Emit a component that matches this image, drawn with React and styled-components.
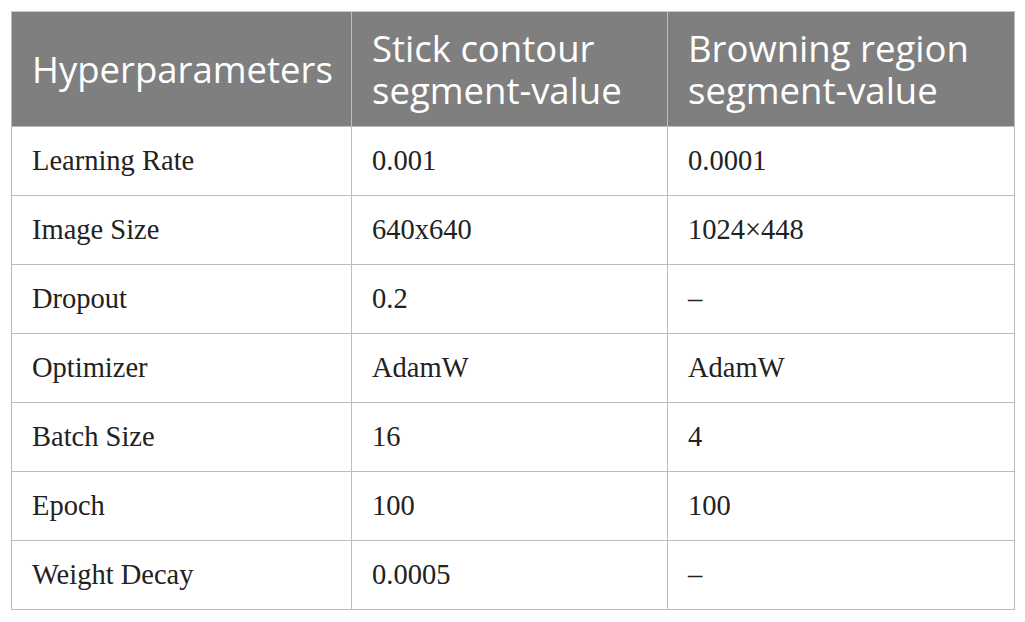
import React from 'react';
import styled, { createGlobalStyle } from 'styled-components';

const GlobalStyle = createGlobalStyle`
  body {
    margin: 0;
    background: #fff;
  }
`;

const rows = [
  ['Learning Rate', '0.001', '0.0001'],
  ['Image Size', '640x640', '1024×448'],
  ['Dropout', '0.2', '–'],
  ['Optimizer', 'AdamW', 'AdamW'],
  ['Batch Size', '16', '4'],
  ['Epoch', '100', '100'],
  ['Weight Decay', '0.0005', '–'],
];

const Page = styled.div`
  padding: 11px;
`;

const Table = styled.table`
  width: 1003px;
  border-collapse: collapse;
  table-layout: fixed;
`;

const HeadCell = styled.th`
  background: #7f7f7f;
  color: #fff;
  font-family: 'Open Sans', sans-serif;
  font-weight: 400;
  font-size: 36.5px;
  line-height: 42px;
  text-align: left;
  padding: 0 20px;
  height: 114px;
  border: 1px solid #bdbdbd;
  border-top-color: #c8c8c8;
`;

const Cell = styled.td`
  font-family: 'Liberation Serif', serif;
  font-size: 28.5px;
  color: #222;
  padding: 0 20px;
  height: 68px;
  border: 1px solid #bdbdbd;
`;

export default function App() {
  return (
    <Page>
      <GlobalStyle />
      <Table>
        <colgroup>
          <col style={{ width: 340 }} />
          <col style={{ width: 316 }} />
          <col style={{ width: 347 }} />
        </colgroup>
        <thead>
          <tr>
            <HeadCell>Hyperparameters</HeadCell>
            <HeadCell>Stick contour segment-value</HeadCell>
            <HeadCell>Browning region segment-value</HeadCell>
          </tr>
        </thead>
        <tbody>
          {rows.map((row) => (
            <tr key={row[0]}>
              {row.map((val, i) => (
                <Cell key={i}>{val}</Cell>
              ))}
            </tr>
          ))}
        </tbody>
      </Table>
    </Page>
  );
}
